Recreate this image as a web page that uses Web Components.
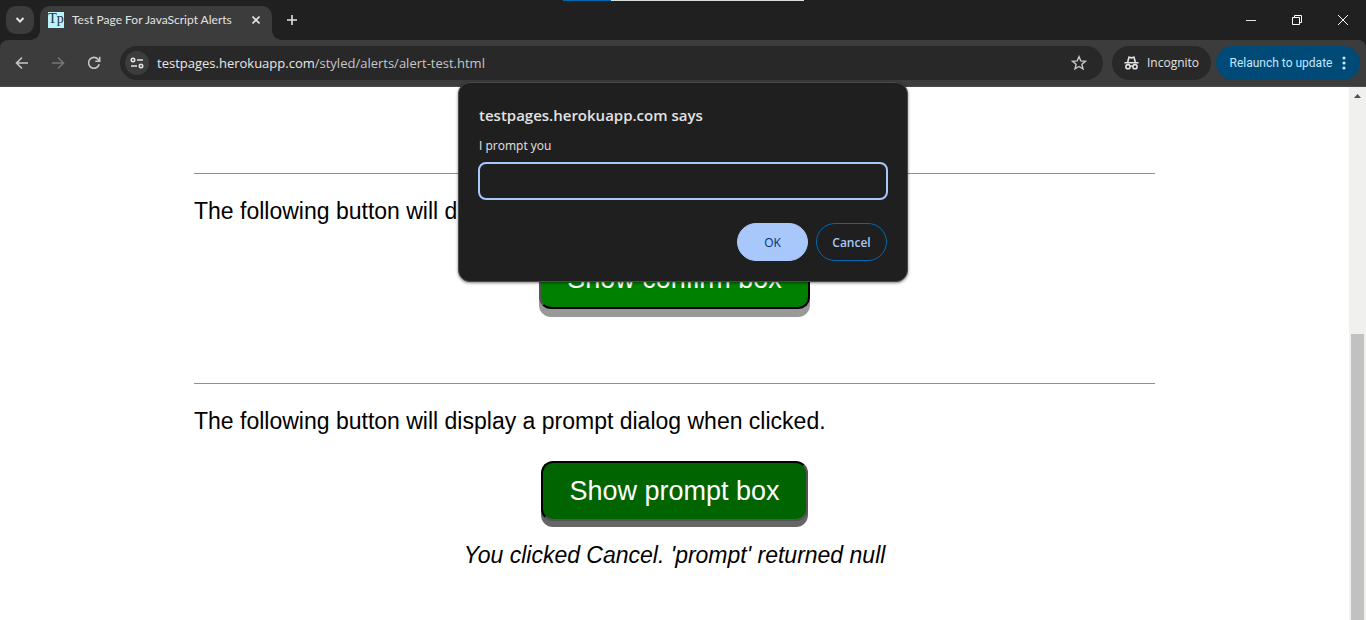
<!DOCTYPE html>
<html lang="en">
<head>
<meta charset="utf-8">
<title>Test Page For JavaScript Alerts</title>
<style>
  html, body { height: 100%; margin: 0; }
  body { overflow: hidden; background: #fff; font-family: "Open Sans", "Noto Sans", sans-serif; }
</style>
</head>
<body>
<browser-window>
  <tab-strip slot="chrome"><browser-tab>Test Page For JavaScript Alerts</browser-tab></tab-strip>
  <tool-bar slot="chrome"></tool-bar>
  <alert-page>
    <demo-section action="Show alert box"></demo-section>
    <demo-section action="Show confirm box">The following button will display a confirm dialog when clicked.</demo-section>
    <demo-section action="Show prompt box" pressed>The following button will display a prompt dialog when clicked.<span slot="result">You clicked Cancel. 'prompt' returned null</span></demo-section>
  </alert-page>
  <page-scrollbar slot="scroll"></page-scrollbar>
  <prompt-dialog slot="dialog" origin="testpages.herokuapp.com says">I prompt you</prompt-dialog>
</browser-window>

<script>
const define = (name, markup, setup) => {
  const template = document.createElement('template');
  template.innerHTML = markup;
  customElements.define(name, class extends HTMLElement {
    constructor() {
      super();
      this.attachShadow({ mode: 'open' }).append(template.content.cloneNode(true));
    }
    connectedCallback() { if (setup) setup(this, this.shadowRoot); }
  });
};

define('browser-window', `
<style>
  :host { display: flex; flex-direction: column; height: 100vh; position: relative; overflow: hidden; }
  .chrome { flex: none; background: #202020; }
  .view { flex: 1; min-height: 0; display: flex; }
  .page { flex: 1; min-width: 0; overflow: hidden; }
  .loading { position: absolute; top: 0; left: 563px; width: 241px; height: 1px; background: linear-gradient(90deg, #0067b0 48px, #d8dedb 48px); }
  ::slotted([slot=dialog]) { position: absolute; top: 82px; left: 50%; transform: translateX(-50%); }
</style>
<div class="chrome"><slot name="chrome"></slot></div>
<div class="view"><div class="page"><slot></slot></div><slot name="scroll"></slot></div>
<div class="loading"></div>
<slot name="dialog"></slot>`);

define('tab-strip', `
<style>
  :host { display: flex; height: 40px; color: #e3e3e3; }
  button { border: 0; padding: 0; background: none; color: inherit; display: grid; place-items: center; }
  .search { width: 28px; height: 28px; margin: 6px 6px 0; border-radius: 10px; background: #3c3c3c; }
  .new { width: 28px; height: 28px; margin: 6px 0 0 6px; }
  .caption { margin-left: auto; display: flex; }
  .caption button { width: 46px; height: 40px; }
  svg { display: block; fill: none; stroke: currentColor; }
</style>
<button class="search" aria-label="Search tabs"><svg width="10" height="8" stroke-width="2"><path d="M1.5 2 5 5.5 8.500 2"/></svg></button>
<slot></slot>
<button class="new" aria-label="New tab"><svg width="12" height="12" stroke-width="1.600"><path d="M6 1v10M1 6h10"/></svg></button>
<div class="caption">
  <button aria-label="Minimize"><svg width="10" height="10" stroke="#fff"><path d="M0 5.500h10"/></svg></button>
  <button aria-label="Restore"><svg width="10" height="10" style="color:#fff"><path d="M.5 2.500h7v7h-7zM2.500 2.500v-2h7v7h-2"/></svg></button>
  <button aria-label="Close"><svg width="12" height="12" style="color:#fff"><path d="m1 1 10 10M11 1 1 11"/></svg></button>
</div>`);

define('browser-tab', `
<style>
  :host { position: relative; display: flex; align-items: center; box-sizing: border-box; width: 232px; height: 34px; margin-top: 6px; padding: 0 8px 6px; border-radius: 10px 10px 0 0; background: #3c3c3c; color: #e3e3e3; font: 12px/16px Lato, sans-serif; }
  :host::before, :host::after { content: ""; position: absolute; bottom: 0; width: 10px; height: 10px; }
  :host::before { right: 100%; background: radial-gradient(circle at 0 0, transparent 10px, #3c3c3c 10px); }
  :host::after { left: 100%; background: radial-gradient(circle at 100% 0, transparent 10px, #3c3c3c 10px); }
  .icon { width: 16px; height: 16px; background: #b9f3fb; color: #20313a; font: 14px/14px "Liberation Serif", serif; text-align: center; margin-right: 8px; }
  .title { flex: 1; min-width: 0; white-space: nowrap; overflow: hidden; }
  button { border: 0; padding: 0; background: none; color: inherit; width: 16px; height: 16px; display: grid; place-items: center; }
</style>
<span class="icon">Tp</span><span class="title"><slot></slot></span>
<button aria-label="Close tab"><svg width="8" height="8" fill="none" stroke="currentColor" stroke-width="1.600"><path d="m.5.5 7 7M7.500.5l-7 7"/></svg></button>`);

define('tool-bar', `
<style>
  :host { display: flex; align-items: center; box-sizing: border-box; height: 47px; padding: 0 6px 1px 4px; background: #3c3c3c; border-bottom: 1px solid #4a4a4a; border-radius: 8px 8px 0 0; color: #c7c7c7; font-size: 12px; }
  button { border: 0; padding: 0; background: none; color: inherit; font: inherit; display: flex; align-items: center; justify-content: center; }
  svg { display: block; fill: none; stroke: currentColor; stroke-width: 1.600; }
  .nav { width: 36px; height: 34px; }
  .nav[disabled] { color: #757575; }
  .address { flex: 1; display: flex; align-items: center; height: 34px; box-sizing: border-box; margin: 0 9px 0 8px; padding: 0 16px 0 5px; border-radius: 17px; background: #282828; }
  .site { width: 24px; height: 24px; border-radius: 12px; background: #3c3c3c; margin-right: 8px; color: #e3e3e3; }
  .url { flex: 1; font-size: 13px; line-height: 18px; white-space: nowrap; }
  .url b { font-weight: 400; color: #e8e8e8; }
  .pill { height: 34px; border-radius: 17px; background: #282828; color: #e3e3e3; white-space: nowrap; }
  .incognito { width: 99px; gap: 8px; margin-right: 5px; }
  .update { width: 144px; gap: 10px; background: #004a77; color: #c2e7ff; font-family: Roboto, sans-serif; }
</style>
<button class="nav" aria-label="Back"><svg width="14" height="14"><path d="M13 7H2M7 1.500 1.500 7 7 12.500"/></svg></button>
<button class="nav" aria-label="Forward" disabled><svg width="14" height="14"><path d="M1 7h11M7 1.500 12.500 7 7 12.500"/></svg></button>
<button class="nav" aria-label="Reload"><svg width="14" height="14"><path d="M12.200 8.200A5.400 5.400 0 1 1 11 3.200L12.500 5M12.700.8V5.200H8.300"/></svg></button>
<div class="address">
  <button class="site" aria-label="View site information"><svg width="14" height="12"><circle cx="3" cy="3" r="1.700"/><path d="M7 3h6M1 9h6"/><circle cx="11" cy="9" r="1.700"/></svg></button>
  <span class="url"><b>testpages.herokuapp.com</b>/styled/alerts/alert-test.html</span>
  <button aria-label="Bookmark this tab"><svg width="16" height="16" style="stroke-width:1.400"><path d="m8 1.600 1.800 4.300 4.700.4-3.600 3 1.100 4.600L8 11.500l-4 2.400 1.100-4.600-3.600-3 4.700-.4z"/></svg></button>
</div>
<button class="pill incognito"><svg width="15" height="14"><path d="M.5 6.700h14M3.700 6 5 1.300l2.500.6 2.500-.6L11.300 6"/><circle cx="4" cy="10.700" r="2.100"/><circle cx="11" cy="10.700" r="2.100"/><path d="M6 10.400q1.500-.8 3 0"/></svg>Incognito</button>
<button class="pill update">Relaunch to update<svg width="4" height="14" style="fill:currentColor;stroke:none"><circle cx="2" cy="2" r="1.600"/><circle cx="2" cy="7" r="1.600"/><circle cx="2" cy="12" r="1.600"/></svg></button>`);

define('alert-page', `
<style>
  :host { display: flex; flex-direction: column; box-sizing: border-box; width: 961px; max-width: 100%; margin: 0 auto; font-family: "Liberation Sans", Arial, sans-serif; color: #000; }
</style>
<slot></slot>`);

define('demo-section', `
<style>
  :host { display: flex; flex-direction: column; align-items: center; height: 210px; box-sizing: border-box; border-top: 1px solid #909090; font-size: 23px; line-height: 28px; }
  :host(:first-of-type) { height: 86px; border-top: 0; visibility: hidden; overflow: hidden; }
  p { margin: 0; }
  .intro { align-self: stretch; padding-top: 23px; }
  button { font: 27px/32px "Liberation Sans", Arial, sans-serif; color: #fff; background: #008000; border: 2px outset #000; border-radius: 12px; padding: 12px 26px; margin-top: 24px; box-shadow: 0 8px #999; }
  :host([pressed]) button { background: #006400; border-style: inset; margin-top: 26px; box-shadow: 0 6px #666; }
  .result { font-style: italic; margin-top: 20px; }
</style>
<p class="intro"><slot></slot></p>
<button></button>
<p class="result"><slot name="result"></slot></p>`, (host, root) => {
  root.querySelector('button').textContent = host.getAttribute('action');
});

define('page-scrollbar', `
<style>
  :host { display: flex; flex-direction: column; width: 17px; box-sizing: border-box; padding: 0 2px; background: #f0f0ef; align-items: stretch; }
  .up { flex: none; height: 17px; display: grid; place-items: center; }
  .space { flex: 230; }
  .thumb { flex: 286; background: #c1c1c1; }
</style>
<div class="up"><svg width="7" height="4" fill="#505050"><path d="M3.500 0 7 4H0z"/></svg></div>
<div class="space"></div><div class="thumb"></div>`);

define('prompt-dialog', `
<style>
  :host { display: block; box-sizing: border-box; width: 450px; padding: 21px 19px 20px; border: 1px solid #484848; border-radius: 12px; background: #1f1f1f; color: #e3e3e3; box-shadow: 0 1px 3px rgba(0,0,0,.5); }
  h1 { margin: 0; padding: 0 1px; font-size: 15px; line-height: 22px; font-weight: 600; }
  label { display: block; margin-top: 11px; padding: 0 1px; font-size: 12px; line-height: 18px; }
  input { display: block; box-sizing: border-box; width: 100%; height: 38px; margin-top: 7px; padding: 0 10px; border: 2px solid #a8c7fa; border-radius: 8px; background: none; color: inherit; font: inherit; outline: 0; }
  .actions { display: flex; justify-content: flex-end; gap: 8px; margin-top: 23px; padding: 0 1px; }
  button { width: 71px; height: 38px; box-sizing: border-box; padding: 2px 0 0; border: 1px solid #0068b4; border-radius: 19px; background: none; color: #a8c7fa; font: 600 12px/18px "Open Sans", sans-serif; }
  .ok { background: #a8c7fa; border-color: #a8c7fa; color: #062e6f; font-weight: 500; }
</style>
<h1></h1>
<label for="answer"><slot></slot></label>
<input id="answer" type="text">
<div class="actions"><button class="ok">OK</button><button>Cancel</button></div>`, (host, root) => {
  root.querySelector('h1').textContent = host.getAttribute('origin');
});
</script>
</body>
</html>
